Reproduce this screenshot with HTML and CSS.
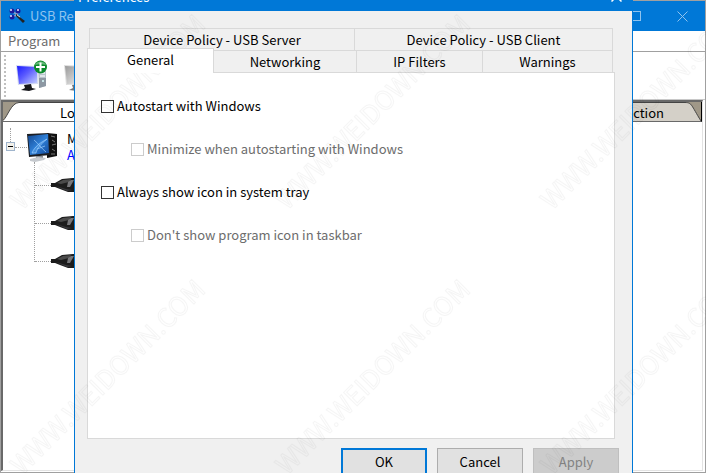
FILE: index.html
```html
<!DOCTYPE html>
<html lang="en">
<head>
    <meta charset="UTF-8">
    <meta name="viewport" content="width=device-width, initial-scale=1.0">
    <title>Preferences</title>
    <link rel="stylesheet" href="styles.css">
</head>
<body>

    <!-- Shared icons -->
    <svg class="hidden" width="0" height="0">
        <defs>
            <linearGradient id="blueScreen" x1="0" y1="0" x2="1" y2="1">
                <stop offset="0" stop-color="#1a1aff"/>
                <stop offset=".45" stop-color="#5c5cff"/>
                <stop offset="1" stop-color="#c4d0ff"/>
            </linearGradient>
            <linearGradient id="greyScreen" x1="0" y1="0" x2="1" y2="1">
                <stop offset="0" stop-color="#9a9a9a"/>
                <stop offset="1" stop-color="#f4f4f4"/>
            </linearGradient>
            <linearGradient id="deskScreen" x1="0" y1="0" x2="1" y2="1">
                <stop offset="0" stop-color="#12468f"/>
                <stop offset=".5" stop-color="#2f7fd6"/>
                <stop offset="1" stop-color="#124a9c"/>
            </linearGradient>
        </defs>
        <symbol id="plug" viewBox="0 0 36 14">
            <path d="M0 5h4l7-4 11-1h11v4h3v6h-4l-2 4H17L9 11 4 9H0z" fill="#1c1c1c"/>
            <path d="M6 5l6-3 8-1-2 3-8 2z" fill="#4a4a4a"/>
            <path d="M17 4l3-2h3l-4 7h-3z" fill="#77777a"/>
            <path d="M5 8l10 3 6 1-5 1-7-3z" fill="#39393c"/>
        </symbol>
    </svg>

    <!-- Main window -->
    <div class="window">
        <header class="titlebar">
            <svg class="app-icon" width="17" height="16" viewBox="0 0 17 16">
                <path d="M4 4l5 3M10 3L7 8M3 9l5-2M8 7l3 3" stroke="#8fa3c8" stroke-width="1.5"/>
                <circle cx="3" cy="3" r="2.5" fill="#1b1b9c"/><circle cx="2" cy="2" r="1" fill="#e5e5ff"/>
                <circle cx="9" cy="3" r="2.5" fill="#1b1b9c"/><circle cx="9" cy="2" r="1" fill="#e5e5ff"/>
                <circle cx="3" cy="9" r="2.5" fill="#1b1b9c"/><circle cx="2" cy="8" r="1" fill="#e5e5ff"/>
                <path d="M7 6l5 4 4 3-2 2-3-3-4-4z" fill="#222"/>
                <path d="M8 7l3 2" stroke="#ccc"/>
            </svg>
            <span class="app-name">USB Redirector</span>
            <button class="caption" aria-label="Maximize">
                <svg width="10" height="10" viewBox="0 0 10 10"><rect x=".5" y=".5" width="9" height="9" fill="none" stroke="currentColor"/></svg>
            </button>
            <button class="caption" aria-label="Close window">
                <svg width="11" height="11" viewBox="0 0 11 11"><path d="M.5 .5l10 10M10.500 .5l-10 10" stroke="currentColor"/></svg>
            </button>
        </header>

        <nav class="menubar">
            <a href="#">Program</a>
        </nav>

        <div class="toolbar">
            <span class="grip"></span>
            <button class="tool" aria-label="Add computer">
                <svg width="32" height="32" viewBox="0 0 32 32">
                    <path d="M22 7h8v19l-7 2z" fill="#b9c2cc"/>
                    <path d="M24 13h5M24 16h5" stroke="#eef2f5" stroke-width="1.5"/>
                    <path d="M23 18h7v8l-7 2z" fill="#8d98a3"/>
                    <circle cx="27" cy="21" r="1" fill="#dff"/>
                    <path d="M0 5l22 1v18L2 25z" fill="#d6dcf2"/>
                    <path d="M1 6l20 1v16L3 24z" fill="url(#blueScreen)"/>
                    <path d="M8 25l7-1 1 4 4 1-7 2-8-1 4-2z" fill="#17171c"/>
                    <circle cx="24.500" cy="7" r="6.500" fill="#0c8a2c"/>
                    <path d="M19 5a6 6 0 0 1 11 0c-3-1-8-1-11 0z" fill="#65b878"/>
                    <path d="M24.500 2.500v9M20 7h9" stroke="#fff" stroke-width="2"/>
                </svg>
            </button>
            <button class="tool" aria-label="Remove computer">
                <svg width="32" height="32" viewBox="0 0 32 32">
                    <path d="M22 7h8v19l-7 2z" fill="#ccc"/>
                    <path d="M0 5l22 1v18L2 25z" fill="#ddd"/>
                    <path d="M1 6l20 1v16L3 24z" fill="url(#greyScreen)"/>
                    <path d="M8 25l7-1 1 4 4 1-7 2-8-1 4-2z" fill="#777"/>
                </svg>
            </button>
        </div>

        <main class="client">
            <div class="view-tabs">
                <svg class="slope" width="16" height="19" viewBox="0 0 16 19">
                    <path d="M0 19C5 14 8 1 16 .5V19z" fill="#fff"/>
                    <path d="M0 18.500C5 14 8 1 16 .5" fill="none" stroke="#444"/>
                </svg>
                <button class="view-tab view-tab-on">Local USB devices</button>
                <button class="view-tab">Remote connection</button>
                <svg class="slope" width="16" height="19" viewBox="0 0 16 19">
                    <path d="M0 .5C7 .5 6 3 16 19H0z" fill="#d4d0c8"/>
                    <path d="M0 .5C7 .5 6 3 16 19" fill="none" stroke="#444"/>
                </svg>
            </div>

            <div class="tree">
                <div class="node">
                    <div class="fold">
                        <span class="stem"></span>
                        <button class="toggle" aria-label="Collapse"></button>
                    </div>
                    <span class="branch"></span>
                    <svg width="32" height="30" viewBox="0 0 32 30">
                        <path d="M20 1l10 1v22l-10 2z" fill="#111"/>
                        <path d="M24 4l4 1M25 8l3 2M25 13l4-1M25 17l3 2M24 22h4" stroke="#777"/>
                        <path d="M0 2l22-1 1 22-21 2z" fill="#1b1d22"/>
                        <path d="M1 4l20-2 1 19-19 2z" fill="url(#deskScreen)"/>
                        <path d="M5 21c3-7 8-10 15-14-6 5-10 9-11 14zM7 8c4 3 7 8 12 12M10 17l8-3" fill="#5fa8ec" fill-opacity=".5" stroke="#9ed0ff" stroke-width=".7"/>
                        <path d="M9 24h7v3H9z" fill="#8a8f96"/>
                        <path d="M3 27l8-2 8 1-2 2-9 2-5-1z" fill="#c5c9ce"/>
                    </svg>
                    <div class="node-text">
                        <div>My computer</div>
                        <div class="node-state">All devices</div>
                    </div>
                </div>
                <ul class="devices">
                    <li><span class="branch"></span><svg class="plug" width="36" height="14"><use href="#plug"/></svg></li>
                    <li><span class="branch"></span><svg class="plug" width="36" height="14"><use href="#plug"/></svg></li>
                    <li><span class="branch"></span><svg class="plug" width="36" height="14"><use href="#plug"/></svg></li>
                </ul>
            </div>
        </main>
    </div>

    <!-- Preferences dialog -->
    <form class="dialog" onsubmit="return false">
        <div class="dialog-title">
            <span>Preferences</span>
            <button type="button" class="dialog-close" aria-label="Close">
                <svg width="11" height="11" viewBox="0 0 11 11"><path d="M.5 .5l10 10M10.500 .5l-10 10" stroke="currentColor" stroke-width="1.5"/></svg>
            </button>
        </div>

        <div class="tabs">
            <div class="tab-row tab-row-back">
                <button type="button" class="tab">Device Policy - USB Server</button>
                <button type="button" class="tab">Device Policy - USB Client</button>
            </div>
            <div class="tab-row tab-row-front">
                <button type="button" class="tab tab-on">General</button>
                <button type="button" class="tab">Networking</button>
                <button type="button" class="tab">IP Filters</button>
                <button type="button" class="tab">Warnings</button>
            </div>
        </div>

        <div class="panel">
            <label class="option"><input type="checkbox">Autostart with Windows</label>
            <label class="option option-sub"><input type="checkbox" disabled>Minimize when autostarting with Windows</label>
            <label class="option"><input type="checkbox">Always show icon in system tray</label>
            <label class="option option-sub"><input type="checkbox" disabled>Don't show program icon in taskbar</label>
        </div>

        <div class="buttons">
            <button type="submit" class="btn btn-default">OK</button>
            <button type="button" class="btn">Cancel</button>
            <button type="button" class="btn" disabled>Apply</button>
        </div>
    </form>

    <!-- Watermark -->
    <svg class="watermark" aria-hidden="true">
        <pattern id="mark" width="265" height="265" patternUnits="userSpaceOnUse">
            <text class="mark-text" transform="translate(22 211) rotate(-45)">WWW.WEIDOWN.COM</text>
        </pattern>
        <rect width="100%" height="100%" fill="url(#mark)"/>
    </svg>

</body>
</html>
```
FILE: styles.css
```css
* {
    box-sizing: border-box;
}
body {
    position: relative;
    height: 100vh;
    margin: 0;
    overflow: hidden;
    background-color: #fff;
    color: #000;
    font: 13px/20px "Noto Sans CJK SC", "Noto Sans", sans-serif;
}
button {
    padding: 0;
    border: none;
    background: none;
    color: inherit;
    font: inherit;
}
.hidden {
    position: absolute;
}

/* Main window */
.window {
    display: flex;
    flex-direction: column;
    height: 100vh;
    border: 1px solid #a0a0a0;
}
.titlebar {
    display: flex;
    align-items: center;
    height: 30px;
    padding-left: 8px;
    background-color: #0078d7;
    color: #8fc3ee;
}
.app-name {
    flex: 1;
    margin-left: 4px;
}
.caption {
    width: 46px;
    height: 30px;
}
.caption svg {
    display: block;
    margin: auto;
}
.menubar {
    height: 21px;
    padding-left: 7px;
    border-bottom: 1px solid #a0a0a0;
}
.menubar a {
    color: #6d6d6d;
    text-decoration: none;
}
.toolbar {
    display: flex;
    align-items: center;
    gap: 16px;
    height: 48px;
    padding-left: 3px;
    border-bottom: 1px solid #c8c8c8;
}
.grip {
    height: 42px;
    margin-right: -6px;
    border-left: 2px dotted #c0c0c0;
}
.tool svg {
    display: block;
}
.client {
    flex: 1;
    margin: 0 2px 1px 0;
    border: 1px solid #e3e3e3;
    border-top: 2px solid #696969;
    border-left: 2px solid #696969;
}
.view-tabs {
    display: flex;
    height: 20px;
    border-right: 1px solid #000;
    border-bottom: 1px solid #696969;
    background-color: #a09888;
}
.slope {
    flex: none;
}
.view-tab {
    flex: 1;
    border-top: 1px solid #444;
    background-color: #d4d0c8;
    text-align: right;
    padding-right: 21px;
}
.view-tab-on {
    background-color: #fff;
    text-align: left;
    padding: 0 0 0 41px;
}

/* Device tree */
.tree {
    padding: 6px 0 0 2px;
}
.node {
    display: flex;
    align-items: center;
}
.fold {
    display: flex;
    flex-direction: column;
    align-items: center;
    width: 10px;
    height: 38px;
}
.stem {
    height: 14px;
    border-left: 1px dotted #a0a0a0;
}
.toggle {
    width: 9px;
    height: 9px;
    border: 1px solid #9fb4cc;
    background: linear-gradient(#000, #000) center / 5px 1px no-repeat, #f3f1ea;
}
.branch {
    width: 12px;
    border-top: 1px dotted #a0a0a0;
}
.node-text {
    margin-left: 8px;
    line-height: 16px;
}
.node-state {
    color: #00f;
}
.devices {
    margin: -4px 0 0 29px;
    padding: 0;
    border-left: 1px dotted #a0a0a0;
    list-style: none;
}
.devices li {
    display: flex;
    align-items: flex-end;
    height: 38px;
}
.devices li:first-child {
    height: 24px;
}
.devices .branch {
    width: 16px;
}
.plug {
    margin-bottom: -6px;
}

/* Preferences dialog */
.dialog {
    position: absolute;
    top: -18px;
    right: 73px;
    bottom: -14px;
    left: 74px;
    display: flex;
    flex-direction: column;
    border: 1px solid #0078d7;
    background-color: #f0f0f0;
}
.dialog-title {
    display: flex;
    align-items: center;
    justify-content: space-between;
    height: 28px;
    padding: 0 10px 0 3px;
    background-color: #0078d7;
    color: #fff;
}
.tabs {
    padding: 17px 19px 0 14px;
}
.tab-row {
    display: grid;
    border-left: 1px solid #d9d9d9;
}
.tab-row-back {
    grid-template-columns: 265fr 258fr;
}
.tab-row-front {
    grid-template-columns: 124fr 143fr 126fr 130fr;
}
.tab {
    height: 22px;
    border-top: 1px solid #d9d9d9;
    border-right: 1px solid #d9d9d9;
}
.tab-on {
    height: 25px;
    margin: -2px 0 -1px -3px;
    padding-bottom: 2px;
    border-left: 1px solid #d9d9d9;
    background-color: #fff;
    z-index: 1;
}
.panel {
    flex: 1;
    display: flex;
    flex-direction: column;
    align-items: flex-start;
    gap: 23px;
    margin: 0 17px 0 12px;
    padding: 23px 13px;
    border: 1px solid #d9d9d9;
    background-color: #fff;
}
.option {
    display: flex;
    align-items: center;
    gap: 3px;
}
.option-sub {
    margin-left: 30px;
    color: #6d6d6d;
}
.option input {
    appearance: none;
    width: 13px;
    height: 13px;
    margin: 0;
    border: 1px solid #333;
    background-color: #fff;
}
.option input:checked {
    background-color: #0078d7;
}
.option input:disabled {
    border-color: #ccc;
}
.buttons {
    display: flex;
    justify-content: flex-end;
    gap: 10px;
    padding: 9px 13px 11px;
}
.btn {
    width: 86px;
    height: 27px;
    border: 1px solid #adadad;
    background-color: #e1e1e1;
}
.btn-default {
    border: 2px solid #0078d7;
}
.btn:disabled {
    border-color: #bfbfbf;
    background-color: #ccc;
    color: #838383;
}

/* Watermark over the whole screen */
.watermark {
    position: absolute;
    inset: 0;
    width: 100%;
    height: 100%;
    pointer-events: none;
}
.mark-text {
    fill: none;
    stroke: #000;
    stroke-opacity: .04;
    font-size: 26px;
}
```
